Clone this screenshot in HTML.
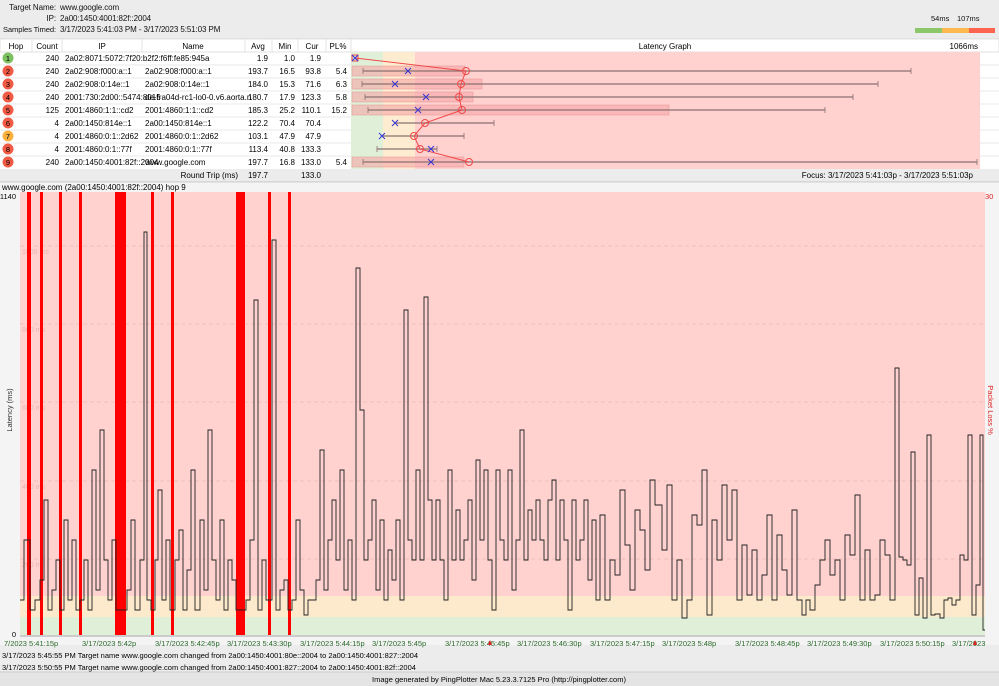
<!DOCTYPE html>
<html><head><meta charset="utf-8"><style>
*{margin:0;padding:0;box-sizing:border-box}
body{width:999px;height:686px;background:#ececec;font-family:"Liberation Sans",sans-serif;font-size:8px;color:#111;position:relative;overflow:hidden}
.a{position:absolute;white-space:nowrap}
.r{text-align:right}
.c{text-align:center}
.h{font-size:8px;letter-spacing:-0.1px}
</style></head><body>
<div class="a r h" style="left:0;width:56px;top:3px">Target Name:</div>
<div class="a h" style="left:60px;top:3px">www.google.com</div>
<div class="a r h" style="left:0;width:56px;top:14px">IP:</div>
<div class="a h" style="left:60px;top:14px">2a00:1450:4001:82f::2004</div>
<div class="a r h" style="left:0;width:56px;top:25px;font-size:7.6px">Samples Timed:</div>
<div class="a h" style="left:60px;top:25px">3/17/2023 5:41:03 PM - 3/17/2023 5:51:03 PM</div>
<div class="a" style="left:931px;top:14px;font-size:7.5px">54ms</div>
<div class="a" style="left:957px;top:14px;font-size:7.5px">107ms</div>
<div class="a" style="left:915px;top:28px;width:27px;height:5px;background:#8cc86a"></div>
<div class="a" style="left:942px;top:28px;width:27px;height:5px;background:#fdb94e"></div>
<div class="a" style="left:969px;top:28px;width:26px;height:5px;background:#fd6450"></div>

<svg class="a" style="left:0;top:0" width="999" height="686" xmlns="http://www.w3.org/2000/svg" font-family="Liberation Sans, sans-serif" font-size="8">
<rect x="0" y="39" width="999" height="130" fill="#fff"/>
<rect x="0" y="39" width="999" height="13" fill="#fff" stroke="#ccc" stroke-width="0.6"/>
<g stroke="#ddd" stroke-width="0.8">
<line x1="32" y1="39" x2="32" y2="52"/><line x1="62" y1="39" x2="62" y2="52"/><line x1="142" y1="39" x2="142" y2="52"/><line x1="245" y1="39" x2="245" y2="52"/><line x1="272" y1="39" x2="272" y2="52"/><line x1="298" y1="39" x2="298" y2="52"/><line x1="326" y1="39" x2="326" y2="52"/><line x1="351" y1="39" x2="351" y2="52"/>
</g>
<g text-anchor="middle"><text x="16" y="49">Hop</text><text x="47" y="49">Count</text><text x="102" y="49">IP</text><text x="193" y="49">Name</text><text x="258" y="49">Avg</text><text x="285" y="49">Min</text><text x="312" y="49">Cur</text><text x="338" y="49">PL%</text><text x="665" y="49">Latency Graph</text></g>
<text x="978" y="49" text-anchor="end">1066ms</text>
<g stroke="#e2e2e2" stroke-width="0.8"><line x1="0" y1="65" x2="999" y2="65"/><line x1="0" y1="78" x2="999" y2="78"/><line x1="0" y1="91" x2="999" y2="91"/><line x1="0" y1="104" x2="999" y2="104"/><line x1="0" y1="117" x2="999" y2="117"/><line x1="0" y1="130" x2="999" y2="130"/><line x1="0" y1="143" x2="999" y2="143"/><line x1="0" y1="156" x2="999" y2="156"/></g>
<rect x="351" y="52" width="32" height="117" fill="#e0f0d8"/>
<rect x="383" y="52" width="32" height="117" fill="#fdecd0"/>
<rect x="415" y="52" width="565" height="117" fill="#ffd2d0"/>
<g fill="#f5a6a6" fill-opacity="0.6" stroke="#e89090" stroke-width="0.5">
<rect x="352" y="66" width="113" height="10"/><rect x="352" y="79" width="130" height="10"/><rect x="352" y="92" width="121" height="10"/><rect x="352" y="105" width="317" height="10"/><rect x="352" y="157" width="112" height="10"/></g>
<g stroke="#8a7070" stroke-width="1.2">
<line x1="363" y1="71" x2="911" y2="71"/><line x1="362" y1="84" x2="878" y2="84"/><line x1="365" y1="97" x2="853" y2="97"/><line x1="368" y1="110" x2="825" y2="110"/><line x1="395" y1="123" x2="494" y2="123"/><line x1="382" y1="136" x2="464" y2="136"/><line x1="377" y1="149" x2="437" y2="149"/><line x1="363" y1="162" x2="977" y2="162"/>
<path d="M363 68v6M911 68v6M362 81v6M878 81v6M365 94v6M853 94v6M368 107v6M825 107v6M494 120v6M464 133v6M377 146v6M437 146v6M363 159v6M977 159v6" stroke-width="0.8"/></g>
<polyline points="355,58 466,71 461,84 459,97 462,110 425,123 414,136 420,149 469,162" fill="none" stroke="#f04848" stroke-width="1"/>
<g fill="none" stroke="#f04848" stroke-width="1"><circle cx="466" cy="71" r="3.5"/><circle cx="461" cy="84" r="3.5"/><circle cx="459" cy="97" r="3.5"/><circle cx="462" cy="110" r="3.5"/><circle cx="425" cy="123" r="3.5"/><circle cx="414" cy="136" r="3.5"/><circle cx="420" cy="149" r="3.5"/><circle cx="469" cy="162" r="3.5"/><rect x="352" y="55" width="6" height="6"/></g>
<g stroke="#3434d8" stroke-width="1"><path d="M352 55l6 6M358 55l-6 6M405 68l6 6M411 68l-6 6M392 81l6 6M398 81l-6 6M423 94l6 6M429 94l-6 6M415 107l6 6M421 107l-6 6M392 120l6 6M398 120l-6 6M379 133l6 6M385 133l-6 6M428 146l6 6M434 146l-6 6M428 159l6 6M434 159l-6 6"/></g>
<g><circle cx="8" cy="58" r="5.5" fill="#7cc060"/><circle cx="8" cy="71" r="5.5" fill="#f15a44"/><circle cx="8" cy="84" r="5.5" fill="#f15a44"/><circle cx="8" cy="97" r="5.5" fill="#f15a44"/><circle cx="8" cy="110" r="5.5" fill="#f15a44"/><circle cx="8" cy="123" r="5.5" fill="#f15a44"/><circle cx="8" cy="136" r="5.5" fill="#fbb040"/><circle cx="8" cy="149" r="5.5" fill="#f15a44"/><circle cx="8" cy="162" r="5.5" fill="#f15a44"/></g>
<g text-anchor="middle" font-size="7.5"><text x="8" y="61">1</text><text x="8" y="74">2</text><text x="8" y="87">3</text><text x="8" y="100">4</text><text x="8" y="113">5</text><text x="8" y="126">6</text><text x="8" y="139">7</text><text x="8" y="152">8</text><text x="8" y="165">9</text></g>
<g text-anchor="end"><text x="59" y="61">240</text><text x="59" y="74">240</text><text x="59" y="87">240</text><text x="59" y="100">240</text><text x="59" y="113">125</text><text x="59" y="126">4</text><text x="59" y="139">4</text><text x="59" y="152">4</text><text x="59" y="165">240</text></g>
<g><text x="65" y="61">2a02:8071:5072:7f20:b2f2:f6ff:fe85:945a</text><text x="65" y="74">2a02:908:f000:a::1</text><text x="65" y="87">2a02:908:0:14e::1</text><text x="65" y="100">2001:730:2d00::5474:8015</text><text x="65" y="113">2001:4860:1:1::cd2</text><text x="65" y="126">2a00:1450:814e::1</text><text x="65" y="139">2001:4860:0:1::2d62</text><text x="65" y="152">2001:4860:0:1::77f</text><text x="65" y="165">2a00:1450:4001:82f::2004</text></g>
<g><text x="145" y="74">2a02:908:f000:a::1</text><text x="145" y="87">2a02:908:0:14e::1</text><text x="145" y="100">de-fra04d-rc1-lo0-0.v6.aorta.n</text><text x="145" y="113">2001:4860:1:1::cd2</text><text x="145" y="126">2a00:1450:814e::1</text><text x="145" y="139">2001:4860:0:1::2d62</text><text x="145" y="152">2001:4860:0:1::77f</text><text x="145" y="165">www.google.com</text></g>
<g text-anchor="end">
<text x="268" y="61">1.9</text><text x="295" y="61">1.0</text><text x="321" y="61">1.9</text>
<text x="268" y="74">193.7</text><text x="295" y="74">16.5</text><text x="321" y="74">93.8</text><text x="347" y="74">5.4</text>
<text x="268" y="87">184.0</text><text x="295" y="87">15.3</text><text x="321" y="87">71.6</text><text x="347" y="87">6.3</text>
<text x="268" y="100">180.7</text><text x="295" y="100">17.9</text><text x="321" y="100">123.3</text><text x="347" y="100">5.8</text>
<text x="268" y="113">185.3</text><text x="295" y="113">25.2</text><text x="321" y="113">110.1</text><text x="347" y="113">15.2</text>
<text x="268" y="126">122.2</text><text x="295" y="126">70.4</text><text x="321" y="126">70.4</text>
<text x="268" y="139">103.1</text><text x="295" y="139">47.9</text><text x="321" y="139">47.9</text>
<text x="268" y="152">113.4</text><text x="295" y="152">40.8</text><text x="321" y="152">133.3</text>
<text x="268" y="165">197.7</text><text x="295" y="165">16.8</text><text x="321" y="165">133.0</text><text x="347" y="165">5.4</text>
<text x="238" y="178">Round Trip (ms)</text><text x="268" y="178">197.7</text><text x="321" y="178">133.0</text>
<text x="973" y="178">Focus: 3/17/2023 5:41:03p - 3/17/2023 5:51:03p</text>
<text x="997" y="190">10 minutes (3/17/2023 5:41:03p - 3/17/2023 5:51:03p)</text>
</g>
<rect x="0" y="181" width="999" height="1.5" fill="#d8d8d8"/>
<rect x="0" y="183" width="999" height="462" fill="#f4f4f4"/>
<text x="2" y="190">www.google.com (2a00:1450:4001:82f::2004) hop 9</text>
<rect x="20" y="192" width="965" height="404" fill="#ffd2d0"/>
<rect x="20" y="596" width="965" height="21" fill="#fdeacc"/>
<rect x="20" y="617" width="965" height="18" fill="#e0f0d8"/>
<g stroke="#e9b8b6" stroke-dasharray="4,3" stroke-width="0.7"><line x1="20" y1="246" x2="985" y2="246"/><line x1="20" y1="324" x2="985" y2="324"/><line x1="20" y1="402" x2="985" y2="402"/><line x1="20" y1="481" x2="985" y2="481"/><line x1="20" y1="559" x2="985" y2="559"/></g>
<g fill="#e7b3b1" font-size="7"><text x="22" y="254">1000 ms</text><text x="22" y="332">800 ms</text><text x="22" y="410">600 ms</text><text x="22" y="489">400 ms</text><text x="22" y="567">200 ms</text></g>
<g fill="#ff0000"><rect x="27" y="192" width="4" height="443"/><rect x="40" y="192" width="3" height="443"/><rect x="59" y="192" width="3" height="443"/><rect x="79" y="192" width="3" height="443"/><rect x="115" y="192" width="11" height="443"/><rect x="151" y="192" width="3" height="443"/><rect x="171" y="192" width="3" height="443"/><rect x="236" y="192" width="9" height="443"/><rect x="268" y="192" width="3" height="443"/><rect x="288" y="192" width="3" height="443"/></g>
<path fill="none" stroke="#222" stroke-width="0.9" d="M20,600H24V540H30V610H35V600H40V580H44V500H48V610H52V590H56V560H60V610H64V520H68V600H72V540H76V610H80V600H84V560H88V610H92V470H96V590H100V430H104V560H108V600H112V540H116V610H127V590H131V520H135V610H140V560H144V232H147V600H151V610H155V560H158V490H162V600H166V540H170V610H175V560H179V530H183V610H187V570H191V470H195V610H200V520H204V590H208V430H212V560H216V600H220V520H224V610H228V560H232V580H236V610H246V600H250V540H254V300H258V610H262V560H266V600H272V240H276V610H280V590H284V580H288V610H292V600H296V520H300V590H304V615H308V600H312V600H316V580H320V450H324V590H328V540H332V500H336V560H340V470H344V590H348V540H352V600H356V268H360V410H364V560H368V540H372V500H376V590H380V520H384V600H388V550H392V580H396V520H400V600H404V310H408V540H412V560H416V470H420V560H424V297H428V500H432V560H436V500H440V560H444V600H448V470H452V560H456V510H460V560H464V540H468V500H472V580H476V460H480V540H484V470H488V560H492V610H496V470H500V540H504V560H508V470H512V590H516V540H520V430H524V560H528V510H532V540H536V500H540V540H544V560H548V500H552V480H556V560H560V500H564V540H568V610H572V500H576V560H580V540H584V500H588V580H592V520H596V600H600V515H605V600H610V560H615V575H620V490H625V545H630V590H635V510H640V530H645V570H650V480H655V505H662V550H667V485H672V600H677V560H682V618H687V600H692V515H697V525H702V470H707V615H712V520H717V560H722V485H727V540H732V490H737V600H742V545H747V595H752V550H757V600H762V575H767V515H772V600H777V535H782V570H787V595H792V510H797V600H802V615H806V600H810V610H815V585H820V560H825V540H830V575H835V560H840V600H845V535H850V555H855V495H860V600H865V550H870V600H875V595H880V540H885V555H890V600H895V368H899V557H903V560H907V565H911V452H915V615H919V578H923V618H927V435H931V615H935V614H940V618H944V600H948V598H952V605H956V600H960V555H964V560H968V435H972V615H976V585H980V435H983V630H985"/>
<text x="16" y="199" text-anchor="end" font-size="7.5">1140</text>
<text x="16" y="637" text-anchor="end" font-size="7.5">0</text>
<text x="985" y="199" fill="#e02020" font-size="7.5">30</text>
<text transform="translate(12,410) rotate(-90)" text-anchor="middle" font-size="7.5" fill="#333">Latency (ms)</text>
<text transform="translate(988,410) rotate(90)" text-anchor="middle" font-size="7.5" fill="#e02020">Packet Loss %</text>
<line x1="20" y1="636" x2="985" y2="636" stroke="#888" stroke-width="0.8"/>
<g fill="#2a6a2a" font-size="7.5"><text x="4" y="646">7/2023 5:41:15p</text><text x="82" y="646">3/17/2023 5:42p</text><text x="155" y="646">3/17/2023 5:42:45p</text><text x="227" y="646">3/17/2023 5:43:30p</text><text x="300" y="646">3/17/2023 5:44:15p</text><text x="372" y="646">3/17/2023 5:45p</text><text x="445" y="646">3/17/2023 5:45:45p</text><text x="517" y="646">3/17/2023 5:46:30p</text><text x="590" y="646">3/17/2023 5:47:15p</text><text x="662" y="646">3/17/2023 5:48p</text><text x="735" y="646">3/17/2023 5:48:45p</text><text x="807" y="646">3/17/2023 5:49:30p</text><text x="880" y="646">3/17/2023 5:50:15p</text><text x="952" y="646">3/17/2023</text></g>
<path d="M488 645l2-5 2 5zM973 645l2-5 2 5z" fill="#e02020"/>
<rect x="0" y="649" width="999" height="23" fill="#ececec"/>
<g font-size="7.5"><text x="2" y="658">3/17/2023 5:45:55 PM Target name www.google.com changed from 2a00:1450:4001:80e::2004 to 2a00:1450:4001:827::2004</text><text x="2" y="670">3/17/2023 5:50:55 PM Target name www.google.com changed from 2a00:1450:4001:827::2004 to 2a00:1450:4001:82f::2004</text></g>
<rect x="0" y="672" width="999" height="14" fill="#e4e4e4"/>
<line x1="0" y1="672" x2="999" y2="672" stroke="#ccc"/>
<text x="499" y="682" text-anchor="middle" font-size="7.5">Image generated by PingPlotter Mac 5.23.3.7125 Pro (http://pingplotter.com)</text>
</svg>
</body></html>
